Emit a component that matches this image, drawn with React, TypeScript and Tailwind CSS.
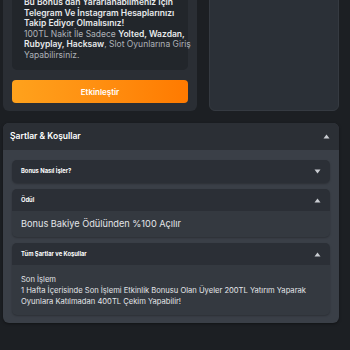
import { ReactNode } from "react"

const font = { fontFamily: "Inter, 'Noto Sans', sans-serif" }

function Caret({ up }: { up?: boolean }) {
  return (
    <svg width="7" height="5" viewBox="0 0 7 5" className={up ? "" : "rotate-180"}>
      <path d="M3.5 0.5L6.5 4.5H0.5Z" fill="#c9ccd1" />
    </svg>
  )
}

function Item({ title, open, children, headClass }: { title: string; open?: boolean; children?: ReactNode; headClass?: string }) {
  return (
    <div className="rounded-[5px] overflow-hidden bg-[#343940] shadow-[0_1px_2px_rgba(0,0,0,0.25)]">
      <div className={`${headClass ?? "h-[22px]"} bg-[#2b2f36] flex items-center justify-between pl-[9px] pr-[9px]`}>
        <span className="text-white font-bold text-[5.8px] whitespace-nowrap">{title}</span>
        <Caret up={open} />
      </div>
      {open && children}
    </div>
  )
}

export default function App() {
  return (
    <div className="min-h-[350px] w-[350px] bg-[#1c1f23] overflow-hidden" style={font}>
      <div className="-mt-[22px] flex gap-[12px] pl-[3px] pr-[11px]">
        <div className="w-[194px] bg-[#2a2e34] rounded-[6px] p-[9px] pb-[8px] flex flex-col gap-[10px]">
          <div className="bg-[#22262b] rounded-[5px] px-[12px] pt-[10px] pb-[10px] text-[8.5px] leading-[10.5px] text-[#aeb2b8] whitespace-nowrap">
            <div className="font-semibold text-[#e8eaec]">
              Bu Bonus dan Yararlanabilmeniz İçin
              <br />
              Telegram Ve İnstagram Hesaplarınızı
              <br />
              Takip Ediyor Olmalısınız!
            </div>
            100TL Nakit İle Sadece <b className="font-semibold text-[#e8eaec]">Yolted, Wazdan,</b>
            <br />
            <b className="font-semibold text-[#e8eaec]">Rubyplay, Hacksaw</b>, Slot Oyunlarına Giriş
            <br />
            Yapabilirsiniz.
          </div>
          <button className="h-[23px] rounded-[4px] bg-gradient-to-r from-[#ffa21c] to-[#ff7a00] text-white text-[8px] font-semibold">
            Etkinleştir
          </button>
        </div>
        <div className="flex-1 bg-[#2b3037] border border-[#353a41] rounded-[6px]" />
      </div>

      <div className="mt-[12px] ml-[3px] w-[336px] rounded-[6px] overflow-hidden bg-[#3a3f47] shadow-[0_1px_3px_rgba(0,0,0,0.4)]">
        <div className="h-[27px] bg-[#2b2f35] flex items-center justify-between pl-[7px] pr-[9px]">
          <span className="text-white text-[8.5px] font-semibold">Şartlar &amp; Koşullar</span>
          <Caret up />
        </div>
        <div className="px-[9px] pt-[10px] pb-[8px] flex flex-col gap-[6px]">
          <Item title="Bonus Nasıl İşler?" headClass="h-[23px]" />
          <Item title="Ödül" open>
            <div className="h-[26px] flex items-center px-[9px] text-[9.2px] text-[#e3e5e8] whitespace-nowrap">
              Bonus Bakiye Ödülünden %100 Açılır
            </div>
          </Item>
          <Item title="Tüm Şartlar ve Koşullar" open>
            <div className="px-[9px] pt-[8.5px] pb-[8.5px] text-[7.6px] leading-[11px] text-[#e3e5e8] whitespace-nowrap">
              Son İşlem
              <br />
              1 Hafta İçerisinde Son İşlemi Etkinlik Bonusu Olan Üyeler 200TL Yatırım Yaparak
              <br />
              Oyunlara Katılmadan 400TL Çekim Yapabilir!
            </div>
          </Item>
        </div>
      </div>
    </div>
  )
}
